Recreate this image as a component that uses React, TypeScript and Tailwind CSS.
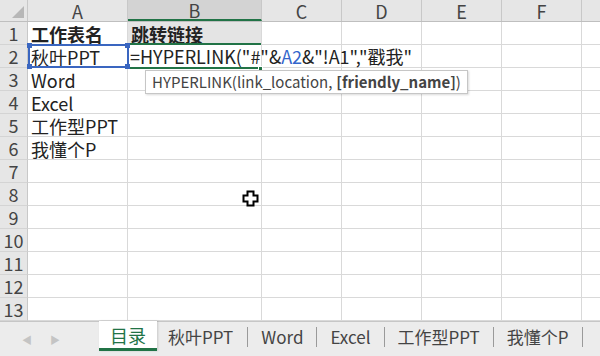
import React from "react";

const cols = [
  { name: "A", w: "w-[100px]" },
  { name: "B", w: "w-[134px]" },
  { name: "C", w: "w-[80px]" },
  { name: "D", w: "w-[80px]" },
  { name: "E", w: "w-[80px]" },
  { name: "F", w: "w-[80px]" },
];

const colA: Record<number, string> = {
  1: "工作表名",
  2: "秋叶PPT",
  3: "Word",
  4: "Excel",
  5: "工作型PPT",
  6: "我懂个P",
};

const tabs = ["秋叶PPT", "Word", "Excel", "工作型PPT", "我懂个P"];

const font = { fontFamily: '"Noto Sans CJK SC", "Noto Sans", sans-serif' };

function Cursor() {
  return (
    <svg className="absolute left-[242px] top-[190px]" width="17" height="17" viewBox="0 0 17 17">
      <path
        d="M5.5 1.5h6v4h4v6h-4v4h-6v-4h-4v-6h4z"
        fill="#fff"
        stroke="#000"
        strokeWidth="2"
      />
    </svg>
  );
}

export default function App() {
  return (
    <div className="relative w-[600px] h-[356px] overflow-hidden bg-white text-[#222]" style={font}>
      {/* Column header */}
      <div className="flex h-[22px] bg-[#e6e6e6] border-b border-[#bfbfbf]">
        <div className="relative w-[28px] border-r border-[#c8c8c8]">
          <div className="absolute right-[3px] bottom-[3px] w-0 h-0 border-l-[12px] border-l-transparent border-b-[12px] border-b-[#b7b7b7]" />
        </div>
        {cols.map((c) => (
          <div
            key={c.name}
            className={`${c.w} flex items-center justify-center text-[18px] leading-[20px] text-[#444] border-r border-[#c8c8c8] ${
              c.name === "B" ? "bg-[#d3d3d3] border-b-2 border-b-[#217346] text-[#222]" : ""
            }`}
          >
            {c.name}
          </div>
        ))}
        <div className="flex-1" />
      </div>

      {/* Rows */}
      {Array.from({ length: 13 }, (_, i) => i + 1).map((r) => (
        <div key={r} className="flex h-[23px]">
          <div className="w-[28px] flex items-center justify-center bg-[#e6e6e6] border-r border-[#c8c8c8] border-b border-b-[#d4d4d4] text-[18px] leading-[20px] text-[#444]">
            {r}
          </div>
          {cols.map((c) => (
            <div
              key={c.name}
              className={`${c.w} relative flex items-center border-r border-b border-[#d9d9d9] ${
                r === 1 && c.name === "B" ? "bg-[#e4e4e4]" : ""
              }`}
            >
              {c.name === "A" && colA[r] && (
                <span className={`pl-[3px] pt-[1px] text-[18px] leading-[20px] whitespace-nowrap ${r === 1 ? "font-bold" : ""}`}>
                  {colA[r]}
                </span>
              )}
              {c.name === "B" && r === 1 && (
                <span className="pl-[3px] pt-[1px] text-[18px] leading-[20px] font-bold whitespace-nowrap">跳转链接</span>
              )}
              {c.name === "B" && r === 2 && (
                <span className="absolute left-[2px] top-[1px] z-10 text-[18px] leading-[20px] whitespace-nowrap">
                  =HYPERLINK("#"&amp;<span className="text-[#3366cc]">A2</span>&amp;"!A1","戳我"
                </span>
              )}
            </div>
          ))}
          <div className="flex-1 border-b border-[#d9d9d9]" />
        </div>
      ))}

      {/* A2 reference highlight (blue) */}
      <div className="absolute left-[28px] top-[44px] w-[101px] h-[24px] border-2 border-[#3a66c0] pointer-events-none">
        <div className="absolute -left-[3px] -top-[3px] w-[5px] h-[5px] bg-[#3a66c0]" />
        <div className="absolute -right-[3px] -top-[3px] w-[5px] h-[5px] bg-[#3a66c0]" />
        <div className="absolute -left-[3px] -bottom-[3px] w-[5px] h-[5px] bg-[#3a66c0]" />
        <div className="absolute -right-[3px] -bottom-[3px] w-[5px] h-[5px] bg-[#3a66c0]" />
      </div>

      {/* B2 active cell (green) */}
      <div className="absolute left-[130px] top-[43px] w-[131px] h-[26px] border-y-2 border-[#217346] pointer-events-none">
        <div className="absolute -right-[2px] -bottom-[4px] w-[5px] h-[5px] bg-[#217346] border border-white" />
      </div>

      {/* Formula tooltip */}
      <div className="absolute left-[145px] top-[70px] h-[24px] px-[6px] flex items-center bg-white border border-[#c6c6c6] shadow-[1px_1px_2px_rgba(0,0,0,0.15)] text-[15px] leading-[20px] text-[#444] whitespace-nowrap z-20">
        HYPERLINK(link_location, <span className="font-bold ml-[4px]">[friendly_name]</span>)
      </div>

      <Cursor />

      {/* Sheet tabs */}
      <div className="absolute left-0 bottom-0 w-[600px] h-[35px] flex items-start bg-[#ececec] border-t border-[#c6c6c6]">
        <div className="w-[99px] shrink-0 h-full flex items-center gap-[18px] pl-[22px] text-[#c4c4c4] text-[10px]">
          <span>◀</span>
          <span>▶</span>
        </div>
        <div className="w-[58px] shrink-0 h-[30px] -mt-[1px] flex items-center justify-center bg-white border-b-[3px] border-[#217346] text-[#217346] text-[18px] leading-[20px] shadow-[1px_0_2px_rgba(0,0,0,0.15)]">
          目录
        </div>
        {tabs.map((t, i) => (
          <div key={t} className="shrink-0 h-[30px] flex items-center text-[17px] leading-[20px] text-[#444] whitespace-nowrap">
            <span className={i === 0 ? "pl-[11px] pr-[14px]" : "px-[13px]"}>{t}</span>
            <span className="w-px h-[20px] bg-[#9a9a9a]" />
          </div>
        ))}
      </div>
    </div>
  );
}
